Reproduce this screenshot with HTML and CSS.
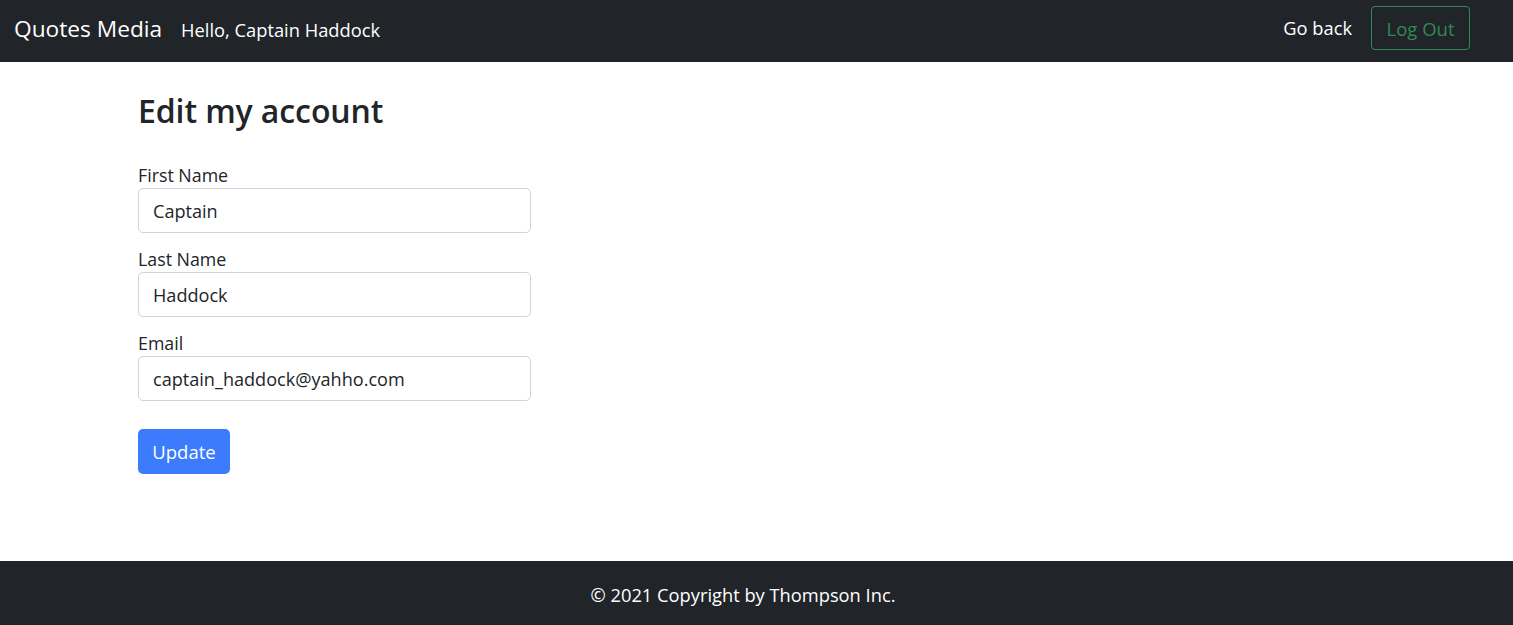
FILE: index.html
```html
<!DOCTYPE html>
<html lang="en">
<head>
<meta charset="utf-8">
<title>Edit my account - Quotes Media</title>
<link rel="stylesheet" href="styles.css">
</head>
<body>
<header class="navbar">
  <div class="nav-left">
    <a class="brand" href="#">Quotes Media</a>
    <span class="greeting">Hello, Captain Haddock</span>
  </div>
  <div class="nav-right">
    <a class="nav-link" href="#">Go back</a>
    <button class="btn-logout" type="button">Log Out</button>
  </div>
</header>
<main class="main">
  <div class="container">
    <h2 class="title">Edit my account</h2>
    <form class="form">
      <div class="field">
        <label class="label" for="fn">First Name</label>
        <input class="input" id="fn" type="text" value="Captain">
      </div>
      <div class="field">
        <label class="label" for="ln">Last Name</label>
        <input class="input" id="ln" type="text" value="Haddock">
      </div>
      <div class="field">
        <label class="label" for="em">Email</label>
        <input class="input" id="em" type="email" value="captain_haddock@yahho.com">
      </div>
      <button class="btn-update" type="button">Update</button>
    </form>
  </div>
</main>
<footer class="footer">© 2021 Copyright by Thompson Inc.</footer>
</body>
</html>
```

FILE: styles.css
```css
* { box-sizing: border-box; }
html, body { margin: 0; padding: 0; }
body {
  font-family: "Open Sans", "Noto Sans", "Liberation Sans", sans-serif;
  color: #212529;
  background: #fff;
  min-height: 100vh;
  display: flex;
  flex-direction: column;
  font-size: 18.3px;
  line-height: 1.5;
}
.navbar {
  height: 62px;
  background: #212529;
  display: flex;
  align-items: center;
  justify-content: space-between;
  padding: 0 43px 0 14px;
}
.nav-left { display: flex; align-items: center; margin-bottom: 3px; }
.brand {
  color: #fff;
  text-decoration: none;
  font-size: 22.7px;
  margin-right: 19px;
}
.greeting { color: #fff; font-size: 18.3px; }
.nav-right { display: flex; align-items: center; margin-bottom: 6px; }
.nav-link {
  color: #fff;
  text-decoration: none;
  font-size: 18.3px;
  margin-right: 19px;
}
.btn-logout {
  font-family: inherit;
  background: transparent;
  color: #2f8a55;
  border: 1px solid #2f8a55;
  border-radius: 4px;
  width: 99px;
  height: 44px;
  font-size: 18.5px;
  padding: 0;
}
.main { flex: 1; }
.container {
  padding: 0 138px;
}
.title {
  font-size: 32px;
  font-weight: 600;
  line-height: 1.2;
  margin: 0;
  padding-top: 30px;
  margin-bottom: 32px;
  letter-spacing: -0.1px;
}
.form { width: 393px; }
.field { margin-bottom: 13px; }
.label { display: block; font-size: 17.8px; line-height: 26px; }
.input {
  display: block;
  width: 393px;
  height: 45px;
  border: 1px solid #ced4da;
  border-radius: 5px;
  padding: 0 14px;
  font-family: inherit;
  font-size: 18.1px;
  color: #212529;
}
.btn-update {
  margin-top: 15px;
  width: 92px;
  height: 45px;
  background: #3d7bfd;
  color: #fff;
  border: 0;
  border-radius: 5px;
  font-family: inherit;
  font-size: 18.5px;
  padding: 0;
}
.footer {
  height: 64px;
  background: #212529;
  color: #fff;
  display: flex;
  align-items: center;
  justify-content: center;
  padding: 4px 27px 0 0;
  font-size: 18.3px;
}
```
